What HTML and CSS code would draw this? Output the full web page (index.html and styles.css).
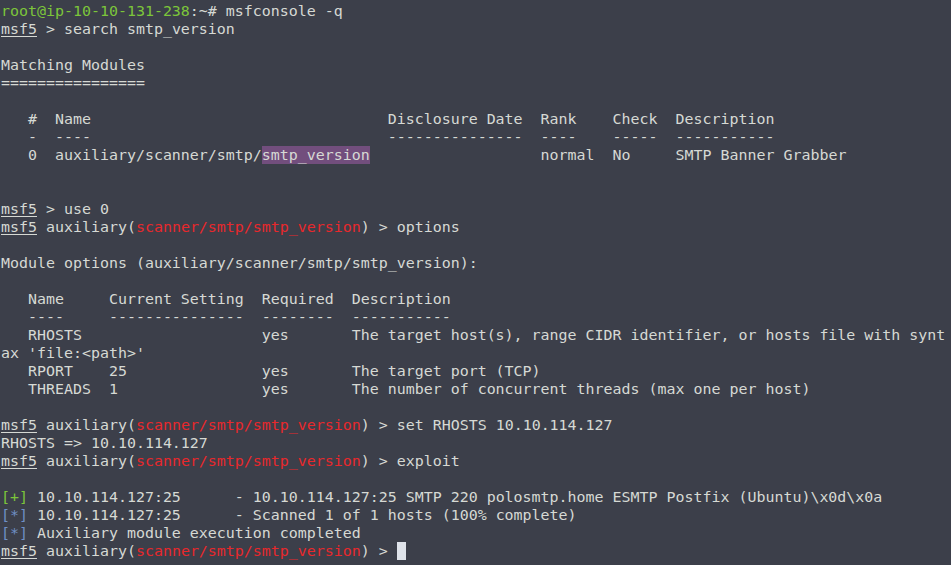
FILE: index.html
```html
<!DOCTYPE html>
<html>
<head>
<meta charset="utf-8">
<link rel="stylesheet" href="styles.css">
</head>
<body>
<pre class="term"><span class="g">root@ip-10-10-131-238</span>:~# msfconsole -q
<span class="u">msf5</span> &gt; search smtp_version

Matching Modules
================

   #  Name                                 Disclosure Date  Rank    Check  Description
   -  ----                                 ---------------  ----    -----  -----------
   0  auxiliary/scanner/smtp/<span class="hl">smtp_version</span>                   normal  No     SMTP Banner Grabber


<span class="u">msf5</span> &gt; use 0
<span class="u">msf5</span> auxiliary(<span class="r">scanner/smtp/smtp_version</span>) &gt; options

Module options (auxiliary/scanner/smtp/smtp_version):

   Name     Current Setting  Required  Description
   ----     ---------------  --------  -----------
   RHOSTS                    yes       The target host(s), range CIDR identifier, or hosts file with synt
ax 'file:&lt;path&gt;'
   RPORT    25               yes       The target port (TCP)
   THREADS  1                yes       The number of concurrent threads (max one per host)

<span class="u">msf5</span> auxiliary(<span class="r">scanner/smtp/smtp_version</span>) &gt; set RHOSTS 10.10.114.127
RHOSTS =&gt; 10.10.114.127
<span class="u">msf5</span> auxiliary(<span class="r">scanner/smtp/smtp_version</span>) &gt; exploit

<span class="g">[+]</span> 10.10.114.127:25      - 10.10.114.127:25 SMTP 220 polosmtp.home ESMTP Postfix (Ubuntu)\x0d\x0a
<span class="b">[*]</span> 10.10.114.127:25      - Scanned 1 of 1 hosts (100% complete)
<span class="b">[*]</span> Auxiliary module execution completed
<span class="u">msf5</span> auxiliary(<span class="r">scanner/smtp/smtp_version</span>) &gt; <span class="cursor"> </span></pre>
</body>
</html>
```
FILE: styles.css
```css
html, body {
  margin: 0;
  padding: 0;
  background: #3c3f4a;
  overflow: hidden;
}
.term {
  margin: 0;
  padding: 2px 0 0 1px;
  font-family: "DejaVu Sans Mono", monospace;
  font-size: 14.95px;
  line-height: 18px;
  color: #d6d9d4;
  white-space: pre;
}
.g { color: #7cc63a; }
.r { color: #e8282c; }
.b { color: #6f8fc6; }
.u { text-decoration: underline; text-underline-offset: 2px; }
.hl { background: #724e7d; display: inline-block; height: 18px; vertical-align: top; }
.cursor { background: #dfe3ea; display: inline-block; width: 9px; height: 18px; vertical-align: top; }
```
